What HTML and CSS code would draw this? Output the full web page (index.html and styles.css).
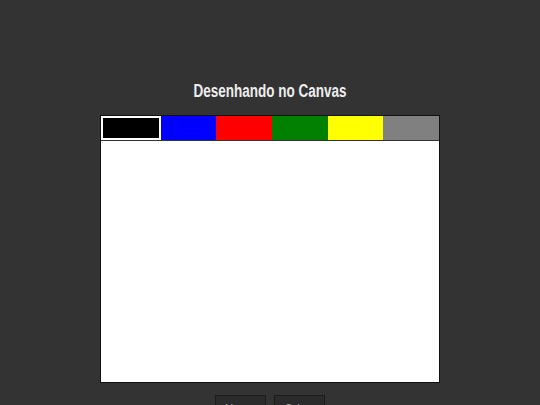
FILE: index.html
```html
<!DOCTYPE html>
<html lang="pt">
<head>
<meta charset="utf-8">
<title>Desenhando no Canvas</title>
<link rel="stylesheet" href="styles.css">
</head>
<body>
<main class="app">
  <h1 class="title">Desenhando no Canvas</h1>
  <div class="board">
    <div class="palette">
      <div class="swatch black selected"></div>
      <div class="swatch blue"></div>
      <div class="swatch red"></div>
      <div class="swatch green"></div>
      <div class="swatch yellow"></div>
      <div class="swatch gray"></div>
    </div>
    <div class="canvas"></div>
  </div>
  <div class="actions">
    <button class="btn">Limpar</button>
    <button class="btn">Salvar</button>
  </div>
</main>
</body>
</html>
```
FILE: styles.css
```css
html, body {
  margin: 0;
  padding: 0;
  background: #333333;
  height: 100%;
  overflow: hidden;
}
.app {
  display: flex;
  flex-direction: column;
  align-items: center;
  padding-top: 79px;
  font-family: "Liberation Sans", Arial, sans-serif;
}
.title {
  margin: 0 0 12px 0;
  font-size: 18px;
  line-height: 24px;
  font-weight: bold;
  color: #eeeeee;
  transform: scaleX(0.75);
}
.board {
  width: 338px;
  border: 1px solid #111111;
  background: #ffffff;
}
.palette {
  display: flex;
  height: 24px;
  border-bottom: 1px solid #333333;
}
.swatch {
  flex: 1 1 0;
}
.swatch.selected {
  border: 2px solid #ffffff;
}
.black { background: #000000; }
.blue { background: #0000ff; }
.red { background: #ff0000; }
.green { background: #008000; }
.yellow { background: #ffff00; }
.gray { background: #808080; }
.canvas {
  height: 241px;
  background: #ffffff;
}
.actions {
  display: flex;
  gap: 8px;
  margin-top: 12px;
}
.btn {
  width: 51px;
  height: 26px;
  background: #2b2b2b;
  border: 1px solid #1c1c1c;
  color: #bbbbbb;
  font-family: "Liberation Sans", Arial, sans-serif;
  font-size: 10px;
  padding: 0 4px;
}
```
